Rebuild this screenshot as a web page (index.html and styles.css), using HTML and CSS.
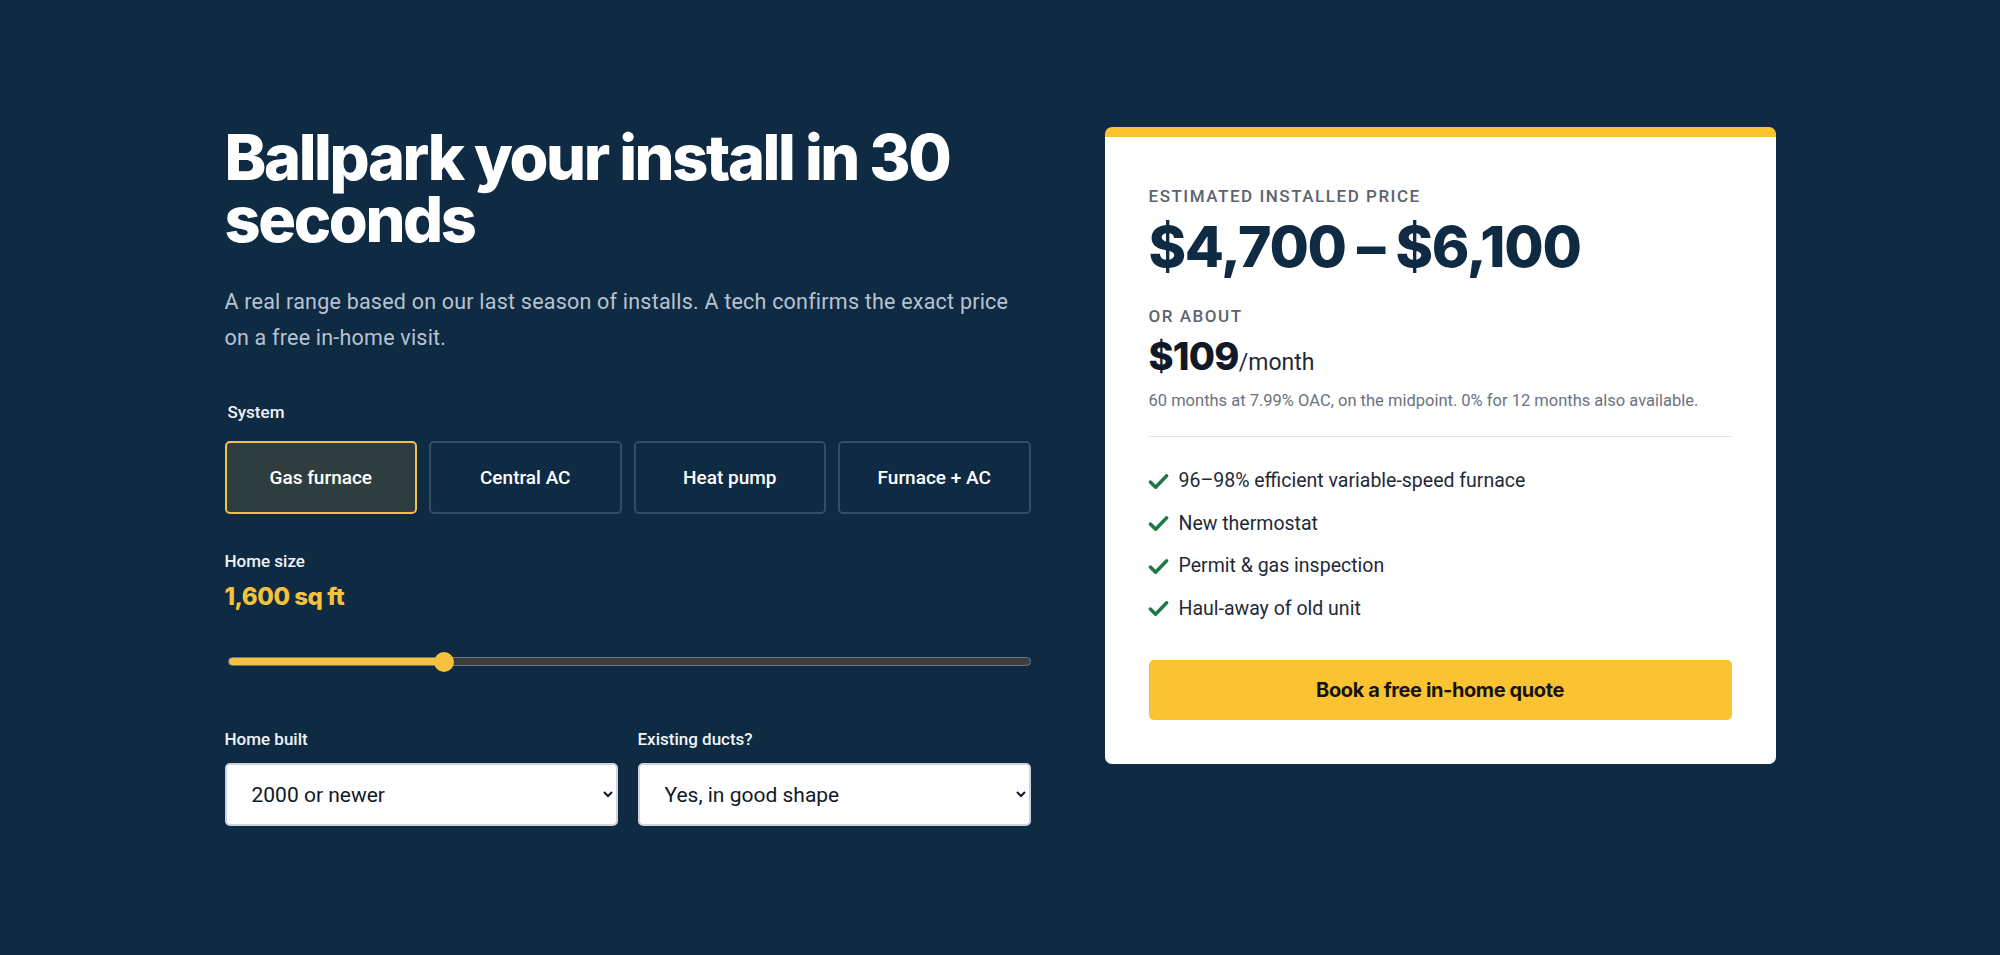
FILE: index.html
```html
<!DOCTYPE html>
<html lang="en">
<head>
<meta charset="utf-8">
<title>Ballpark your install</title>
<link rel="stylesheet" href="styles.css">
</head>
<body>
<main class="wrap">
  <section class="estimator">
    <h1 class="title">Ballpark your install in 30 seconds</h1>
    <p class="lede">A real range based on our last season of installs. A tech confirms the exact price on a free in-home visit.</p>

    <div class="field-label system-label">System</div>
    <div class="systems">
      <button class="sys sys-active" type="button">Gas furnace</button>
      <button class="sys" type="button">Central AC</button>
      <button class="sys" type="button">Heat pump</button>
      <button class="sys" type="button">Furnace + AC</button>
    </div>

    <div class="field-label size-label">Home size</div>
    <div class="size-value">1,600 sq ft</div>
    <input class="range" type="range" min="600" max="4400" step="100" value="1600" style="--fill: 26.8%">

    <div class="selects">
      <label class="sel-group">
        <span class="field-label">Home built</span>
        <select class="sel">
          <option>2000 or newer</option>
          <option>1980–1999</option>
          <option>Before 1980</option>
        </select>
      </label>
      <label class="sel-group">
        <span class="field-label">Existing ducts?</span>
        <select class="sel">
          <option>Yes, in good shape</option>
          <option>Yes, need work</option>
          <option>No ducts</option>
        </select>
      </label>
    </div>
  </section>

  <aside class="card">
    <div class="eyebrow">Estimated installed price</div>
    <div class="price">$4,700 – $6,100</div>
    <div class="eyebrow about">Or about</div>
    <div class="monthly"><span class="monthly-num">$109</span><span class="monthly-unit">/month</span></div>
    <p class="fine">60 months at 7.99% OAC, on the midpoint. 0% for 12 months also available.</p>
    <hr class="divider">
    <ul class="checks">
      <li class="check"><svg class="tick" viewBox="0 0 24 24" aria-hidden="true"><path d="M3.5 12.5l5.5 5.5L20.5 6"/></svg>96–98% efficient variable-speed furnace</li>
      <li class="check"><svg class="tick" viewBox="0 0 24 24" aria-hidden="true"><path d="M3.5 12.5l5.5 5.5L20.5 6"/></svg>New thermostat</li>
      <li class="check"><svg class="tick" viewBox="0 0 24 24" aria-hidden="true"><path d="M3.5 12.5l5.5 5.5L20.5 6"/></svg>Permit &amp; gas inspection</li>
      <li class="check"><svg class="tick" viewBox="0 0 24 24" aria-hidden="true"><path d="M3.5 12.5l5.5 5.5L20.5 6"/></svg>Haul-away of old unit</li>
    </ul>
    <button class="cta" type="button">Book a free in-home quote</button>
  </aside>
</main>
</body>
</html>
```

FILE: styles.css
```css
* { box-sizing: border-box; }

html, body {
  margin: 0;
  padding: 0;
}

body {
  background: #0f2a43;
  color: #ffffff;
  font-family: Roboto, "Liberation Sans", Arial, sans-serif;
  min-height: 955px;
}

.wrap {
  width: 1551px;
  margin: 0 auto;
  padding-top: 127px;
  display: grid;
  grid-template-columns: 1.2fr 1fr;
  column-gap: 74px;
  align-items: start;
}

.estimator {
  display: flex;
  flex-direction: column;
}

.title {
  margin: -1px 0 0;
  font-family: Inter, Roboto, sans-serif;
  font-weight: 800;
  font-size: 63px;
  line-height: 62px;
  letter-spacing: -0.038em;
  color: #ffffff;
}

.lede {
  margin: 34px 0 0;
  font-size: 21.5px;
  line-height: 36px;
  font-weight: 400;
  letter-spacing: 0.01em;
  color: #b7c3d1;
  max-width: 790px;
}

.field-label {
  display: block;
  font-size: 17px;
  line-height: 22px;
  font-weight: 500;
  color: #f1f4f7;
}

.system-label {
  margin-top: 45px;
  padding-left: 3px;
}

.systems {
  margin-top: 18px;
  display: grid;
  grid-template-columns: repeat(4, 1fr);
  gap: 12px;
}

.sys {
  height: 73px;
  background: transparent;
  border: 2px solid #344e69;
  border-radius: 5px;
  color: #ffffff;
  font-family: Roboto, sans-serif;
  font-size: 19px;
  font-weight: 500;
  cursor: pointer;
}

.sys-active {
  background: #2f3d3f;
  border-color: #eec249;
}

.size-label {
  margin-top: 36px;
}

.size-value {
  margin-top: 11px;
  font-family: Inter, Roboto, sans-serif;
  font-size: 24px;
  line-height: 28px;
  font-weight: 800;
  letter-spacing: -0.02em;
  color: #f6c23c;
}

.range {
  -webkit-appearance: none;
  appearance: none;
  display: block;
  margin: 46px 0 0 3px;
  width: 803px;
  height: 9px;
  border-radius: 5px;
  border: 1px solid #6f7780;
  background: linear-gradient(to right, #f6c23c 0 var(--fill), #3c3d40 var(--fill) 100%);
  outline: none;
}

.range::-webkit-slider-thumb {
  -webkit-appearance: none;
  appearance: none;
  width: 20px;
  height: 20px;
  border-radius: 50%;
  background: #f6c23c;
  border: none;
}

.selects {
  margin-top: 62px;
  display: grid;
  grid-template-columns: 1fr 1fr;
  gap: 20px;
}

.sel-group {
  display: flex;
  flex-direction: column;
  gap: 13px;
}

.sel {
  height: 63px;
  width: 100%;
  padding: 0 12px 0 21px;
  background-color: #ffffff;
  border: 2px solid #cbd4de;
  border-radius: 5px;
  color: #111827;
  font-family: Roboto, sans-serif;
  font-size: 21px;
}

/* Card */
.card {
  background: #ffffff;
  border-radius: 7px;
  border-top: 10px solid #fbc232;
  padding: 49px 44px 44px;
  color: #1f2937;
}

.eyebrow {
  font-size: 17px;
  line-height: 20px;
  font-weight: 500;
  letter-spacing: 0.09em;
  text-transform: uppercase;
  color: #5b6470;
}

.price {
  margin-top: 11px;
  font-family: Inter, Roboto, sans-serif;
  font-weight: 800;
  font-size: 57px;
  line-height: 60px;
  letter-spacing: -0.022em;
  color: #0f2a43;
}

.about {
  margin-top: 29px;
}

.monthly {
  margin-top: 7px;
  line-height: 46px;
  color: #111827;
}

.monthly-num {
  font-family: Inter, Roboto, sans-serif;
  font-weight: 800;
  font-size: 38px;
  letter-spacing: -0.02em;
}

.monthly-unit {
  font-size: 23px;
  font-weight: 400;
  color: #1f2937;
}

.fine {
  margin: 2px 0 0;
  font-size: 16.5px;
  line-height: 21px;
  color: #6b7280;
}

.divider {
  margin: 25px 0 0;
  border: 0;
  border-top: 1px solid #e3e6ea;
  height: 0;
}

.checks {
  list-style: none;
  margin: 32px 0 0;
  padding: 0;
  display: flex;
  flex-direction: column;
  gap: 18.5px;
}

.check {
  display: flex;
  align-items: center;
  gap: 9px;
  font-size: 19.5px;
  line-height: 24px;
  color: #1f2937;
}

.tick {
  width: 23px;
  height: 23px;
  margin-left: -2px;
  flex: none;
  fill: none;
  stroke: #1d7a45;
  stroke-width: 3.6;
  stroke-linecap: round;
  stroke-linejoin: round;
}

.cta {
  margin-top: 39px;
  width: 100%;
  height: 60px;
  border: 0;
  border-radius: 5px;
  background: #fbc232;
  color: #141414;
  font-family: Inter, Roboto, sans-serif;
  font-size: 20px;
  font-weight: 700;
  letter-spacing: -0.02em;
  cursor: pointer;
}
```
